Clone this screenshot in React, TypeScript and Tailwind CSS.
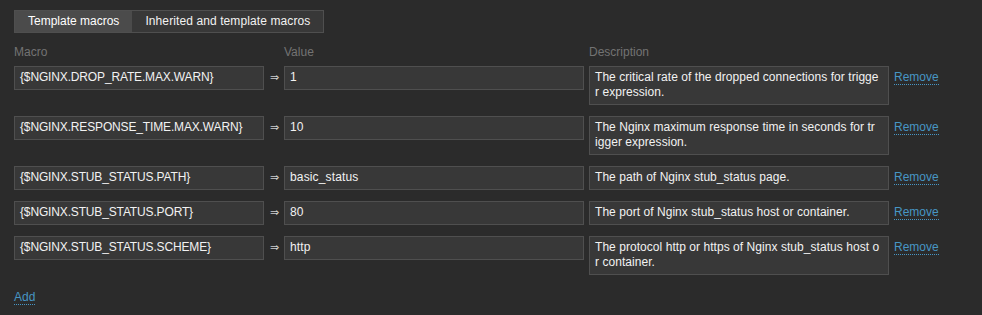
const macros = [
  {
    macro: "{$NGINX.DROP_RATE.MAX.WARN}",
    value: "1",
    description: ["The critical rate of the dropped connections for trigge", "r expression."],
  },
  {
    macro: "{$NGINX.RESPONSE_TIME.MAX.WARN}",
    value: "10",
    description: ["The Nginx maximum response time in seconds for tr", "igger expression."],
  },
  {
    macro: "{$NGINX.STUB_STATUS.PATH}",
    value: "basic_status",
    description: ["The path of Nginx stub_status page."],
  },
  {
    macro: "{$NGINX.STUB_STATUS.PORT}",
    value: "80",
    description: ["The port of Nginx stub_status host or container."],
  },
  {
    macro: "{$NGINX.STUB_STATUS.SCHEME}",
    value: "http",
    description: ["The protocol http or https of Nginx stub_status host o", "r container."],
  },
];

const field =
  "border border-[#4f4f4f] bg-[#383838] px-[5px] pt-[3px] pb-[4px] text-[#f2f2f2] whitespace-nowrap overflow-hidden";

function LinkText({ children }: { children: React.ReactNode }) {
  return (
    <a
      href="#"
      className="text-[#4796c4] border-b border-dotted border-[#4796c4] leading-[15px]"
    >
      {children}
    </a>
  );
}

export default function App() {
  return (
    <main className="w-[982px] h-[315px] bg-[#2b2b2b] pl-[14px] pt-[10px] text-[12px] leading-[15px] font-['Liberation_Sans',Arial,sans-serif] text-[#f2f2f2] overflow-hidden">
      {/* tabs */}
      <div className="inline-flex border border-[#4f4f4f] bg-[#383838]">
        <span className="bg-[#4b4b4b] px-[13px] py-[3px] text-white">Template macros</span>
        <span className="px-[13px] py-[3px] tracking-[0.1px]">Inherited and template macros</span>
      </div>

      {/* header */}
      <div className="flex mt-[12px] text-[#737373]">
        <span className="w-[270px]">Macro</span>
        <span className="w-[305px]">Value</span>
        <span>Description</span>
      </div>

      <div className="flex flex-col gap-[11px] mt-[6px]">
        {macros.map((m) => (
          <div key={m.macro} className="flex items-start">
            <div className={`w-[250px] h-[24px] tracking-[-0.15px] ${field}`}>{m.macro}</div>
            <span className="w-[20px] pt-[4px] text-center text-[#cfcfcf] text-[11px]">⇒</span>
            <div className={`w-[300px] h-[24px] tracking-[0.15px] ${field}`}>{m.value}</div>
            <div className={`ml-[5px] w-[300px] tracking-[0.05px] ${field}`}>
              {m.description.map((line) => (
                <div key={line}>{line}</div>
              ))}
            </div>
            <div className="ml-[5px] pt-[4px]">
              <LinkText>Remove</LinkText>
            </div>
          </div>
        ))}
      </div>

      <div className="mt-[15px]">
        <LinkText>Add</LinkText>
      </div>
    </main>
  );
}
